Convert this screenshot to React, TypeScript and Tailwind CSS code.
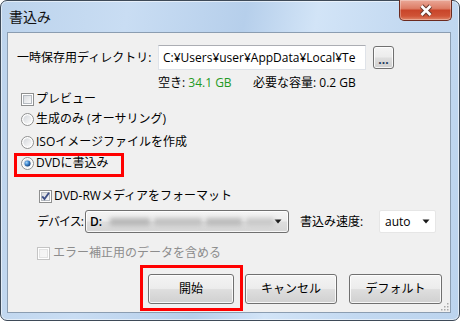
import React from "react";

function CheckBox({ checked = false, disabled = false, id }: { checked?: boolean; disabled?: boolean; id: string }) {
  return (
    <svg width="13" height="13" viewBox="0 0 13 13" className="shrink-0">
      <defs>
        <linearGradient id={id} x1="0" y1="0" x2="1" y2="1">
          <stop offset="0" stopColor={disabled ? "#f3f3f3" : "#d6d9dd"} />
          <stop offset="1" stopColor={disabled ? "#f6f6f6" : "#fbfbfb"} />
        </linearGradient>
      </defs>
      <rect x="0.5" y="0.5" width="12" height="12" fill="#fff" stroke={disabled ? "#c4c4c4" : "#8e8f8f"} />
      <rect x="2.5" y="2.5" width="8" height="8" fill={`url(#${id})`} stroke={disabled ? "#e2e2e2" : "#b4b9bf"} />
      {checked && <path d="M3.2 6.3 L5.5 9 L10 2.8" fill="none" stroke="#3d4f86" strokeWidth="1.9" />}
    </svg>
  );
}

function Radio({ checked = false, id }: { checked?: boolean; id: string }) {
  return (
    <svg width="13" height="13" viewBox="0 0 13 13" className="shrink-0">
      <defs>
        <linearGradient id={id} x1="0" y1="0" x2="1" y2="1">
          <stop offset="0" stopColor="#d3d6da" />
          <stop offset="1" stopColor="#fcfcfc" />
        </linearGradient>
        <radialGradient id={id + "d"} cx="0.35" cy="0.35" r="0.7">
          <stop offset="0" stopColor="#a6d8fa" />
          <stop offset="0.5" stopColor="#3f86cf" />
          <stop offset="1" stopColor="#123e74" />
        </radialGradient>
      </defs>
      <circle cx="6.5" cy="6.5" r="6" fill="#fff" stroke="#8e8f8f" />
      <circle cx="6.5" cy="6.5" r="4.2" fill={`url(#${id})`} />
      {checked && <circle cx="6.5" cy="6.5" r="3" fill={`url(#${id}d)`} />}
    </svg>
  );
}

function Arrow() {
  return (
    <svg width="8" height="5" viewBox="0 0 8 5" className="shrink-0">
      <path d="M0.5 0.5 L7.5 0.5 L4 4.5 Z" fill="#1a1a1a" />
    </svg>
  );
}

const btn =
  "h-[30px] rounded-[3px] border border-[#707070] bg-[linear-gradient(to_bottom,#f4f4f4_0%,#ececec_48%,#dedede_52%,#d0d0d0_100%)] shadow-[inset_0_0_0_1px_rgba(255,255,255,0.8)] flex items-center justify-center";

export default function App() {
  return (
    <div className="w-[460px] h-[324px] bg-white text-[12px] leading-[16px] text-black font-['Open_Sans','Noto_Sans_CJK_JP',sans-serif]">
      <div className="w-[460px] h-[321px] flex flex-col rounded-[7px] border border-[#3e4a58] bg-[linear-gradient(100deg,#bcd3ec_0%,#c9ddf3_25%,#b6cfeb_48%,#d2e4f7_62%,#c3d9f1_80%,#bcd4ee_100%)] shadow-[inset_0_0_0_1px_rgba(255,255,255,0.55)]">
        <div className="h-[31px] flex items-start shrink-0">
          <span className="ml-[8px] mt-[6px] text-[14px] leading-[18px] font-['Noto_Sans_CJK_JP',sans-serif] text-[#111]">書込み</span>
          <div className="ml-auto mr-[7px] -mt-px w-[53px] h-[21px] rounded-b-[5px] border border-[#6b2a1f] border-t-0 bg-[linear-gradient(to_bottom,#eaa898_0%,#dd7d66_42%,#c9452a_52%,#cf5336_80%,#e08668_100%)] shadow-[inset_0_0_0_1px_rgba(255,255,255,0.3)] flex items-center justify-center">
            <svg width="16" height="13" viewBox="0 0 16 13">
              <path d="M3.5 2 L12.5 11 M12.5 2 L3.5 11" stroke="#6a3a30" strokeWidth="4.6" />
              <path d="M3.5 2 L12.5 11 M12.5 2 L3.5 11" stroke="#ffffff" strokeWidth="2.6" />
            </svg>
          </div>
        </div>

        <div className="ml-[6px] mr-[8px] h-[281px] shrink-0 border border-[#8b9db1] bg-[#f0f0f0] flex flex-col relative">
          {/* directory row */}
          <div className="mt-[12px] h-[25px] flex items-center">
            <span className="ml-[9px] w-[141px] shrink-0 whitespace-nowrap">一時保存用ディレクトリ:</span>
            <div className="w-[208px] h-[25px] shrink-0 bg-white border border-[#dfe3e9] border-t-[#abadb3] flex items-center pl-[4px] overflow-hidden whitespace-nowrap">
              C:¥Users¥user¥AppData¥Local¥Te
            </div>
            <div className="ml-[7px] w-[21px] h-[23px] rounded-[3px] border border-[#707070] bg-[linear-gradient(to_bottom,#f4f4f4_0%,#ececec_48%,#dedede_52%,#d0d0d0_100%)] shadow-[inset_0_0_0_1px_rgba(255,255,255,0.8)] flex items-end justify-center pb-[3px] text-[#1e395b] leading-[10px] font-bold">
              ...
            </div>
          </div>

          {/* status row */}
          <div className="mt-[5px] h-[16px] flex items-center ml-[150px] whitespace-nowrap">
            <span className="w-[95px] shrink-0">
              空き: <span className="text-[#1f9a24]">34.1 GB</span>
            </span>
            <span>必要な容量: 0.2 GB</span>
          </div>

          {/* preview */}
          <div className="h-[16px] flex items-center ml-[13px] gap-[2px]">
            <CheckBox id="cb1" />
            <span>プレビュー</span>
          </div>

          <div className="mt-[4px] h-[16px] flex items-center ml-[13px] gap-[2px]">
            <Radio id="r1" />
            <span>生成のみ (オーサリング)</span>
          </div>

          <div className="mt-[7px] h-[16px] flex items-center ml-[13px] gap-[2px]">
            <Radio id="r2" />
            <span>ISOイメージファイルを作成</span>
          </div>

          <div className="mt-[5px] h-[16px] flex items-center ml-[13px] gap-[2px] w-fit relative">
            <Radio id="r3" checked />
            <span>DVDに書込み</span>
            <span className="absolute left-[-7px] top-[-2px] w-[110px] h-[24px] border-[3px] border-[#ff0000]" />
          </div>

          <div className="mt-[17px] h-[16px] flex items-center ml-[31px] gap-[2px]">
            <CheckBox id="cb2" checked />
            <span>DVD-RWメディアをフォーマット</span>
          </div>

          {/* device row */}
          <div className="mt-[6px] h-[23px] flex items-center ml-[29px]">
            <span className="w-[48px] shrink-0 whitespace-nowrap tracking-[-1px]">デバイス:</span>
            <div className="w-[204px] h-[23px] shrink-0 rounded-[3px] border border-[#707070] bg-[linear-gradient(to_bottom,#f4f4f4_0%,#ececec_48%,#dedede_52%,#d6d6d6_100%)] shadow-[inset_0_0_0_1px_rgba(255,255,255,0.8)] flex items-center pl-[4px] pr-[6px]">
              <span className="font-semibold">D:</span>
              <div className="ml-[8px] flex items-center gap-[4px] blur-[2px]">
                <span className="w-[40px] h-[8px] bg-[#b9b9b9]" />
                <span className="w-[48px] h-[8px] bg-[#c2c2c2]" />
                <span className="w-[36px] h-[8px] bg-[#bdbdbd]" />
                <span className="w-[28px] h-[8px] bg-[#cacaca]" />
              </div>
              <span className="ml-auto">
                <Arrow />
              </span>
            </div>
            <span className="ml-[11px] w-[79px] shrink-0 whitespace-nowrap">書込み速度:</span>
            <div className="w-[57px] h-[23px] shrink-0 rounded-[2px] border border-[#e6e6e6] bg-white flex items-center pl-[5px] pr-[5px]">
              <span>auto</span>
              <span className="ml-auto">
                <Arrow />
              </span>
            </div>
          </div>

          <div className="mt-[12px] h-[16px] flex items-center ml-[29px] gap-[3px]">
            <CheckBox id="cb3" disabled />
            <span className="text-[#8d8d8d]">エラー補正用のデータを含める</span>
          </div>

          {/* buttons */}
          <div className="mt-[13px] flex ml-[140px]">
            <div className="relative">
              <div className={btn + " w-[86px] border-[#3c7fb1] shadow-[inset_0_0_0_1px_#cfeafb]"}>開始</div>
              <span className="absolute left-[-8px] top-[-9px] w-[103px] h-[46px] border-[3px] border-[#ff0000]" />
            </div>
            <div className={btn + " ml-[11px] w-[92px]"}>キャンセル</div>
            <div className={btn + " ml-[12px] w-[93px]"}>デフォルト</div>
          </div>

          <svg width="8" height="8" viewBox="0 0 8 8" className="absolute right-[1px] bottom-[1px]">
            <rect x="6" y="0" width="1.5" height="1.5" fill="#a8a8a8" />
            <rect x="3" y="3" width="1.5" height="1.5" fill="#a8a8a8" />
            <rect x="6" y="3" width="1.5" height="1.5" fill="#a8a8a8" />
            <rect x="0" y="6" width="1.5" height="1.5" fill="#a8a8a8" />
            <rect x="3" y="6" width="1.5" height="1.5" fill="#a8a8a8" />
            <rect x="6" y="6" width="1.5" height="1.5" fill="#a8a8a8" />
          </svg>
        </div>
      </div>
    </div>
  );
}
